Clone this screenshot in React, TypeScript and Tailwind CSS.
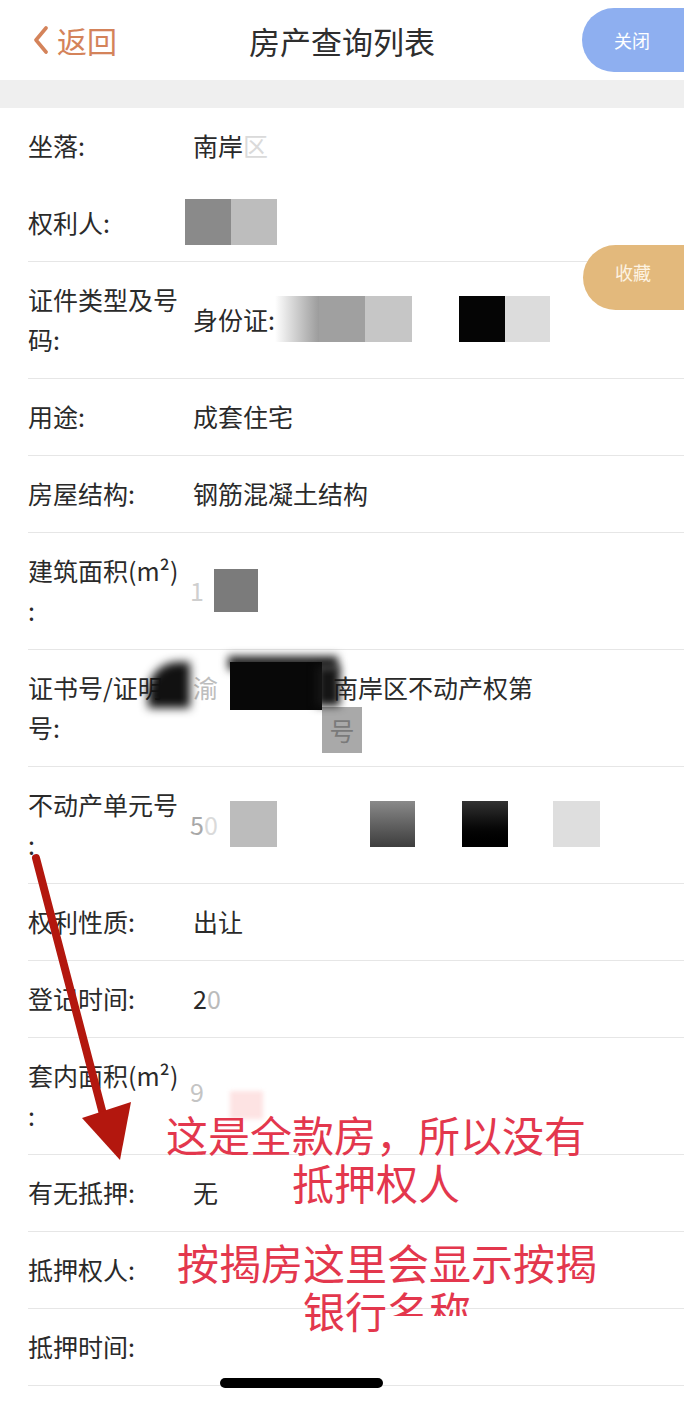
import * as React from 'react';

type RowData = {
  label: string[];
  value?: React.ReactNode;
  overlay?: React.ReactNode;
  noBorder?: boolean;
};

// mosaic square used to hide private data in the screenshot
const Blk = ({ className }: { className: string }) => <div className={'shrink-0 ' + className} />;

const rows: RowData[] = [
  {
    label: ['坐落:'],
    value: (
      <span>
        南岸<span className="text-[#dadada]">区</span>
      </span>
    ),
    noBorder: true,
  },
  {
    label: ['权利人:'],
    value: (
      <div className="flex items-center h-[40px] -ml-[8px]">
        <Blk className="w-[46px] h-[46px] bg-[#8a8a8a]" />
        <Blk className="w-[46px] h-[46px] bg-[#bdbdbd]" />
      </div>
    ),
  },
  {
    label: ['证件类型及号', '码:'],
    value: (
      <div className="flex items-center">
        <span>身份证:</span>
        <Blk className="w-[44px] h-[46px] bg-linear-to-r from-white to-[#9c9c9c]" />
        <Blk className="w-[46px] h-[46px] bg-[#a0a0a0]" />
        <Blk className="w-[47px] h-[46px] bg-[#c6c6c6]" />
        <Blk className="w-[46px] h-[46px] ml-[47px] bg-[#050505]" />
        <Blk className="w-[45px] h-[46px] bg-[#dcdcdc]" />
      </div>
    ),
  },
  { label: ['用途:'], value: <span>成套住宅</span> },
  { label: ['房屋结构:'], value: <span>钢筋混凝土结构</span> },
  {
    label: ['建筑面积(m²)', ':'],
    value: (
      <div className="flex items-center gap-[10px] -ml-[3px]">
        <span className="text-[#cfcfcf]">1</span>
        <Blk className="w-[44px] h-[43px] bg-[#7b7b7b]" />
      </div>
    ),
  },
  {
    label: ['证书号/证明', '号:'],
    value: (
      <div>
        <div>
          <span className="text-[#bdbdbd]">渝</span>
          <span className="ml-[115px]">南岸区不动产权第</span>
        </div>
        <div className="flex items-start h-[40px] pl-[129px]">
          <div className="w-[40px] h-[46px] bg-[#a9a9a9] flex items-center justify-center text-[#7a7a7a] leading-none">
            号
          </div>
        </div>
      </div>
    ),
    overlay: (
      <>
        <div className="absolute left-[120px] top-[12px] w-[42px] h-[46px] bg-[#111] blur-[5px] rounded-tl-[30px]" />
        <div className="absolute left-[200px] top-[6px] w-[110px] h-[14px] bg-[#222] blur-[4px]" />
        <div className="absolute left-[202px] top-[12px] w-[92px] h-[48px] bg-[#080808]" />
        <div className="absolute left-[288px] top-[16px] w-[24px] h-[40px] bg-[#151515] blur-[4px]" />
      </>
    ),
  },
  {
    label: ['不动产单元号', ':'],
    value: (
      <div className="flex items-center -ml-[3px]">
        <span className="w-[40px]">
          <span className="text-[#a8a8a8]">5</span>
          <span className="text-[#dadada]">0</span>
        </span>
        <Blk className="w-[47px] h-[46px] bg-[#bcbcbc]" />
        <Blk className="w-[45px] h-[46px] ml-[93px] bg-linear-to-b from-[#8a8a8a] to-[#3e3e3e]" />
        <Blk className="w-[46px] h-[46px] ml-[47px] bg-linear-to-b from-[#333] to-black" />
        <Blk className="w-[47px] h-[46px] ml-[45px] bg-[#dedede]" />
      </div>
    ),
  },
  { label: ['权利性质:'], value: <span>出让</span> },
  {
    label: ['登记时间:'],
    value: (
      <span>
        2<span className="text-[#bbbbbb]">0</span>
      </span>
    ),
  },
  {
    label: ['套内面积(m²)', ':'],
    value: (
      <div className="flex items-start -ml-[3px]">
        <span className="w-[40px] text-[#c4c4c4]">9</span>
        <Blk className="w-[33px] h-[28px] mt-[20px] bg-[#fde3e3] blur-[2px]" />
      </div>
    ),
  },
  { label: ['有无抵押:'], value: <span>无</span> },
  { label: ['抵押权人:'] },
  { label: ['抵押时间:'] },
];

const InfoRow = ({ row }: { row: RowData }) => (
  <div
    className={
      'relative ml-[28px] flex items-center pt-[17px] pb-[19px] ' +
      (row.noBorder ? 'border-b border-transparent' : 'border-b border-[#e6e6e6]')
    }
  >
    <div className="w-[165px] shrink-0 leading-[40px]">
      {row.label.map((l, i) => (
        <div key={i} className="whitespace-nowrap">
          {l}
        </div>
      ))}
    </div>
    <div className="flex-1 leading-[40px]">{row.value}</div>
    {row.overlay}
  </div>
);

export default function App() {
  return (
    <div className="relative w-[684px] h-[1402px] overflow-hidden bg-white text-[#2a2a2a] font-['Noto_Sans_CJK_SC',sans-serif]">
      {/* Header */}
      <div className="grid grid-cols-[1fr_auto_1fr] items-center h-[80px]">
        <div className="flex items-center pl-[33px] gap-[8px] text-[#d4835a] text-[30px] leading-none">
          <svg width="16" height="28" viewBox="0 0 16 28" fill="none">
            <polyline points="13,2 3,14 13,26" stroke="#d4835a" strokeWidth="3.6" strokeLinecap="round" strokeLinejoin="round" />
          </svg>
          <span>返回</span>
        </div>
        <div className="text-[31px] text-[#2e2e2e] leading-none">房产查询列表</div>
        <div className="flex justify-end self-stretch pt-[8px] pb-[8px]">
          <div className="w-[102px] rounded-l-full bg-[#8eaff0] flex items-center pl-[32px] text-white text-[18px]">
            关闭
          </div>
        </div>
      </div>

      {/* Gray band */}
      <div className="h-[28px] bg-[#efefef]" />

      {/* List */}
      <div className="text-[25px]">
        {rows.map((r, i) => (
          <InfoRow key={i} row={r} />
        ))}
      </div>

      {/* Floating favorite button */}
      <div className="absolute left-[583px] top-[245px] w-[110px] h-[65px] rounded-l-[34px] bg-[#e3b97c] flex items-start pt-[18px] pl-[32px] text-[#fdf3e2] text-[18px] leading-none">
        收藏
      </div>

      {/* Red arrow annotation */}
      <svg className="absolute left-0 top-0 pointer-events-none" width="684" height="1402" viewBox="0 0 684 1402">
        <line x1="36" y1="858" x2="104" y2="1118" stroke="#b3170e" strokeWidth="8" strokeLinecap="round" />
        <polygon points="82,1118 131,1102 120,1160" fill="#b3170e" />
      </svg>

      {/* Red text annotations */}
      <div className="absolute left-[126px] top-[1110px] w-[500px] text-center text-[#e3374d] text-[42px] leading-[48px]">
        <div>这是全款房，所以没有</div>
        <div>抵押权人</div>
      </div>
      <div className="absolute left-[137px] top-[1238px] w-[500px] text-center text-[#e3374d] text-[42px] leading-[48px]">
        <div>按揭房这里会显示按揭</div>
        <div>
          银行
          <span className="inline-block h-[30px] overflow-hidden align-top">名称</span>
        </div>
      </div>

      {/* Home indicator */}
      <div className="absolute left-[220px] top-[1378px] w-[163px] h-[10px] rounded-full bg-black" />
    </div>
  );
}
